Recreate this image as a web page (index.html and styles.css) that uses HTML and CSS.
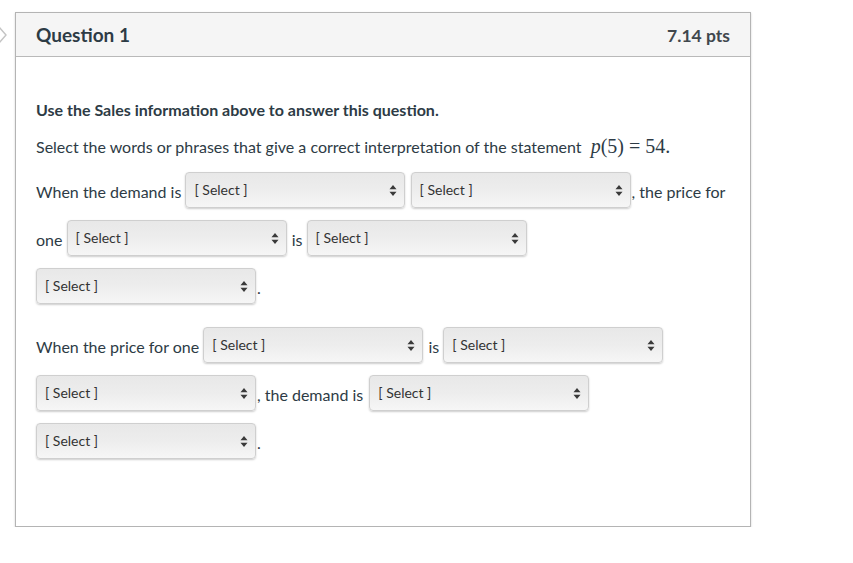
FILE: index.html
```html
<!DOCTYPE html>
<html>
<head>
<meta charset="utf-8">
<link rel="stylesheet" href="styles.css">
</head>
<body>
<div class="page">
  <svg class="chevron" width="10" height="18" viewBox="0 0 10 18"><polyline points="0,1 7,9 0,17" fill="none" stroke="#c4c4c4" stroke-width="1.4"/></svg>
  <div class="card">
    <div class="header">
      <div class="title">Question 1</div>
      <div class="pts">7.14 pts</div>
    </div>
    <div class="body">
      <p class="lead">Use the Sales information above to answer this question.</p>
      <p class="instr">Select the words or phrases that give a correct interpretation of the statement <span class="math"><i>p</i>(5)<span class="eq">=</span>54.</span></p>
      <p class="blanks"><span>When the demand is</span> <span class="sel"><span>[ Select ]</span><svg class="arr" width="8" height="11" viewBox="0 0 8 11"><path d="M4 0 L7.5 4.2 L0.5 4.2 Z M4 11 L7.5 6.8 L0.5 6.8 Z" fill="#3a3a3a"/></svg></span> <span class="sel"><span>[ Select ]</span><svg class="arr" width="8" height="11" viewBox="0 0 8 11"><path d="M4 0 L7.5 4.2 L0.5 4.2 Z M4 11 L7.5 6.8 L0.5 6.8 Z" fill="#3a3a3a"/></svg></span><span>, the price for</span> <span>one</span> <span class="sel"><span>[ Select ]</span><svg class="arr" width="8" height="11" viewBox="0 0 8 11"><path d="M4 0 L7.5 4.2 L0.5 4.2 Z M4 11 L7.5 6.8 L0.5 6.8 Z" fill="#3a3a3a"/></svg></span> <span>is</span> <span class="sel"><span>[ Select ]</span><svg class="arr" width="8" height="11" viewBox="0 0 8 11"><path d="M4 0 L7.5 4.2 L0.5 4.2 Z M4 11 L7.5 6.8 L0.5 6.8 Z" fill="#3a3a3a"/></svg></span> <span class="sel"><span>[ Select ]</span><svg class="arr" width="8" height="11" viewBox="0 0 8 11"><path d="M4 0 L7.5 4.2 L0.5 4.2 Z M4 11 L7.5 6.8 L0.5 6.8 Z" fill="#3a3a3a"/></svg></span><span>.</span></p>
      <p class="blanks"><span>When the price for one</span> <span class="sel"><span>[ Select ]</span><svg class="arr" width="8" height="11" viewBox="0 0 8 11"><path d="M4 0 L7.5 4.2 L0.5 4.2 Z M4 11 L7.5 6.8 L0.5 6.8 Z" fill="#3a3a3a"/></svg></span> <span>is</span> <span class="sel"><span>[ Select ]</span><svg class="arr" width="8" height="11" viewBox="0 0 8 11"><path d="M4 0 L7.5 4.2 L0.5 4.2 Z M4 11 L7.5 6.8 L0.5 6.8 Z" fill="#3a3a3a"/></svg></span> <span class="sel"><span>[ Select ]</span><svg class="arr" width="8" height="11" viewBox="0 0 8 11"><path d="M4 0 L7.5 4.2 L0.5 4.2 Z M4 11 L7.5 6.8 L0.5 6.8 Z" fill="#3a3a3a"/></svg></span><span class="gap">, the demand is</span> <span class="sel"><span>[ Select ]</span><svg class="arr" width="8" height="11" viewBox="0 0 8 11"><path d="M4 0 L7.5 4.2 L0.5 4.2 Z M4 11 L7.5 6.8 L0.5 6.8 Z" fill="#3a3a3a"/></svg></span> <span class="sel"><span>[ Select ]</span><svg class="arr" width="8" height="11" viewBox="0 0 8 11"><path d="M4 0 L7.5 4.2 L0.5 4.2 Z M4 11 L7.5 6.8 L0.5 6.8 Z" fill="#3a3a3a"/></svg></span><span>.</span></p>
    </div>
  </div>
</div>
</body>
</html>
```
FILE: styles.css
```css
html, body {
  margin: 0;
  padding: 0;
  background: #ffffff;
}
body {
  font-family: Lato, "Noto Sans", sans-serif;
  color: #2d3b45;
}
.page {
  position: relative;
  padding: 12px 0 0 15px;
}
.chevron {
  position: absolute;
  left: -1px;
  top: 26px;
}
.card {
  width: 736px;
  box-sizing: border-box;
  border: 1px solid #b4b4b4;
  box-shadow: 0 1px 2px rgba(0,0,0,0.18);
  background: #fff;
}
.header {
  display: flex;
  justify-content: space-between;
  align-items: baseline;
  background: #f5f5f5;
  border-bottom: 1px solid #b9b9b9;
  height: 44px;
  box-sizing: border-box;
  padding: 0 20px;
  line-height: 44px;
}
.title {
  font-weight: bold;
  font-size: 19px;
  color: #2d3b45;
}
.pts {
  font-weight: bold;
  font-size: 17.5px;
  color: #40474d;
}
.body {
  padding: 41px 20px 59px 20px;
}
.body p {
  margin: 0;
  font-size: 16px;
  line-height: 24px;
}
.lead {
  font-weight: bold;
}
.instr {
  margin-top: 13px !important;
}
.math {
  font-family: "Liberation Serif", "DejaVu Serif", serif;
  font-size: 20px;
  line-height: 16px;
  margin-left: 5px;
}
.eq {
  margin: 0 5px;
}
.blanks {
  line-height: 48px !important;
  margin-top: 9px !important;
}
.blanks + .blanks {
  margin-top: 11px !important;
}
.sel {
  display: inline-block;
  position: relative;
  width: 220px;
  height: 36px;
  box-sizing: border-box;
  border: 1px solid #cfcfcf;
  border-radius: 4px;
  background: linear-gradient(to bottom, #e8e8e8 0%, #ededed 50%, #f6f6f6 100%);
  box-shadow: 0 1px 2px rgba(0,0,0,0.2);
  font-size: 14px;
  line-height: 33px;
  padding-left: 8px;
  color: #333;
  vertical-align: 3px;
  margin: 0 1px 0 0;
}
.gap {
  margin-right: 2px;
}
.arr {
  position: absolute;
  right: 7px;
  top: 12px;
}
```
